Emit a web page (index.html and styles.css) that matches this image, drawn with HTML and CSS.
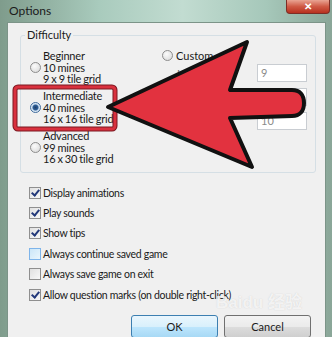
FILE: index.html
```html
<!DOCTYPE html>
<html lang="en">
<head>
    <meta charset="UTF-8">
    <title>Options</title>
    <link rel="stylesheet" href="styles.css">
</head>
<body>

<div class="window">
    <div class="titlebar">
        <span class="title">Options</span>
        <span class="close">&#x2715;</span>
    </div>

    <div class="client">
        <fieldset class="group">
            <legend>Difficulty</legend>
            <div class="levels">
                <div class="presets">
                    <div class="level">
                        <span class="radio"></span>
                        <span class="level-text">Beginner<br>10 mines<br>9 x 9 tile grid</span>
                    </div>
                    <div class="level">
                        <span class="radio checked"></span>
                        <span class="level-text">Intermediate<br>40 mines<br>16 x 16 tile grid</span>
                    </div>
                    <div class="level">
                        <span class="radio"></span>
                        <span class="level-text">Advanced<br>99 mines<br>16 x 30 tile grid</span>
                    </div>
                </div>
                <div class="custom">
                    <div class="custom-option"><span class="radio"></span>Custom</div>
                    <div class="field"><span>Height:</span><span class="textbox">9</span></div>
                    <div class="field"><span>Width:</span><span class="textbox">9</span></div>
                    <div class="field"><span>Mines:</span><span class="textbox">10</span></div>
                </div>
            </div>
        </fieldset>

        <!-- opcoes de jogo -->
        <div class="checks">
            <div class="check-row"><span class="checkbox on"></span>Display animations</div>
            <div class="check-row"><span class="checkbox on"></span>Play sounds</div>
            <div class="check-row"><span class="checkbox on"></span>Show tips</div>
            <div class="check-row"><span class="checkbox hover"></span>Always continue saved game</div>
            <div class="check-row"><span class="checkbox"></span>Always save game on exit</div>
            <div class="check-row"><span class="checkbox on"></span>Allow question marks (on double right-click)</div>
        </div>

        <div class="buttons">
            <button class="button default">OK</button>
            <button class="button">Cancel</button>
        </div>
    </div>

    <span class="watermark">Bai<b>du</b> 经验</span>

    <!-- anotacao: caixa vermelha e seta -->
    <svg class="annotation" width="332" height="337" viewBox="0 0 332 337">
        <rect x="15" y="87" width="100" height="42" rx="3" fill="none" stroke="#7a1820" stroke-width="5"/>
        <rect x="15" y="87" width="100" height="42" rx="3" fill="none" stroke="#d9313e" stroke-width="3"/>
        <path d="M108 107 L247 42 L230 90 L292 90 C300 90 304 95 304 103 C304 111 300 116 292 116 L230 118 L252 167 Z"
              fill="#e2323f" stroke="#111" stroke-width="4" stroke-linejoin="round"/>
    </svg>
</div>

</body>
</html>
```

FILE: styles.css
```css
body {
    margin: 0;
    padding: 0;
    font-family: Lato, "Open Sans", Arial, sans-serif;
    font-size: 11px;
    color: #1a1a1a;
    background-color: #8fab9d;
}
.window {
    position: relative;
    width: 332px;
    height: 337px;
    overflow: hidden;
    background: linear-gradient(90deg, #7f9c8c 0%, #a9cbbd 30%, #c2dcd1 55%, #a6c8ba 80%, #8aa698 100%);
}
.titlebar {
    height: 22px;
    display: flex;
    justify-content: space-between;
    align-items: flex-start;
}
.title {
    font-size: 12px;
    padding: 3px 0 0 9px;
    color: #1b1b1b;
}
.close {
    width: 42px;
    height: 13px;
    margin-right: 2px;
    border: 1px solid #7d2d25;
    border-top: none;
    border-radius: 0 0 4px 4px;
    background: linear-gradient(#e9a493, #cf5a45 50%, #b8301f);
    color: #fff;
    font-size: 10px;
    font-weight: bold;
    text-align: center;
    line-height: 12px;
}
.client {
    height: 315px;
    margin: 0 6px 0 7px;
    background-color: #f0f0f0;
    border: 1px solid #7c9488;
    border-bottom: none;
}

/* grupo dificuldade */
.group {
    margin: 5px 9px 0 12px;
    padding: 8px 8px 7px 9px;
    border: 1px solid #d5dfe5;
    border-radius: 3px;
}
.group legend {
    padding: 0 2px;
    margin-left: -5px;
    line-height: 14px;
}
.levels {
    display: grid;
    grid-template-columns: 131px 1fr;
}
.presets {
    display: flex;
    flex-direction: column;
    gap: 5.5px;
}
.level {
    display: flex;
    align-items: center;
    gap: 2px;
}
.level-text {
    line-height: 11.5px;
    letter-spacing: -0.2px;
    word-spacing: -0.5px;
}
.radio {
    display: inline-block;
    width: 9px;
    height: 9px;
    border: 1px solid #8d8d8d;
    border-radius: 50%;
    background: radial-gradient(circle at 40% 35%, #fbfbfb, #d6d6d6);
}
.radio.checked {
    background: radial-gradient(circle, #1d3e69 0, #2f5f97 2.5px, #c9dcef 3.5px, #f4f8fb 5px);
    border-color: #3f6b9c;
}
.custom-option {
    display: flex;
    align-items: center;
    gap: 3px;
    line-height: 11.5px;
    margin-left: 1px;
}
.field {
    display: flex;
    justify-content: space-between;
    align-items: center;
    margin-top: 6px;
    padding-left: 16px;
    color: #6d6d6d;
}
.custom-option + .field {
    margin-top: 2.5px;
}
.textbox {
    width: 45px;
    height: 16px;
    padding-left: 3px;
    border: 1px solid #c9cdd2;
    background-color: #fff;
    line-height: 16px;
    color: #8a8a8a;
}

/* caixas de selecao */
.checks {
    margin-top: 10px;
    padding-left: 21px;
    font-size: 10.5px;
    letter-spacing: -0.3px;
}
.check-row {
    height: 20.4px;
    display: flex;
    align-items: center;
    gap: 2px;
}
.checkbox {
    position: relative;
    display: inline-block;
    width: 10px;
    height: 10px;
    border: 1px solid #8f8f8f;
    background: linear-gradient(135deg, #e0e0e0, #f8f8f8);
}
.checkbox.on::after {
    content: "";
    position: absolute;
    left: 3px;
    top: 0px;
    width: 3px;
    height: 6px;
    border: solid #23397a;
    border-width: 0 2px 2px 0;
    transform: rotate(40deg);
}
.checkbox.hover {
    border-color: #7eb4ea;
    background: linear-gradient(135deg, #cbe6f8, #eaf6fd);
}

.buttons {
    display: flex;
    justify-content: flex-end;
    gap: 6px;
    margin-top: 10px;
    padding-right: 14px;
}
.button {
    width: 87px;
    height: 23px;
    font-family: inherit;
    font-size: 11px;
    color: #1a1a1a;
    border: 1px solid #707070;
    border-radius: 3px;
    background: linear-gradient(#f3f3f3, #ebebeb 50%, #dddddd 51%, #cfcfcf);
}
.button.default {
    border-color: #3c7fb1;
    background: linear-gradient(#eaf6fd, #d9f0fc 50%, #bee6fd 51%, #a7d9f5);
}

.watermark {
    position: absolute;
    left: 216px;
    top: 288px;
    font-size: 17px;
    font-weight: bold;
    color: rgba(255, 255, 255, 0.75);
    text-shadow: 0 0 1px rgba(180, 180, 180, 0.6);
    font-family: "Liberation Sans", "Noto Sans CJK SC", sans-serif;
}
.annotation {
    position: absolute;
    left: 0;
    top: 0;
}
```
